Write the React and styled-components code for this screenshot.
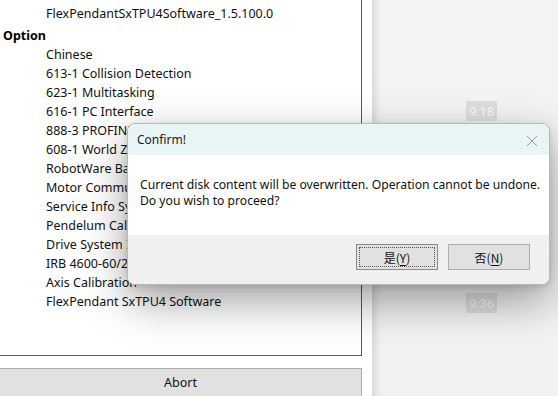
import React from 'react';
import styled, { createGlobalStyle } from 'styled-components';

const GlobalStyle = createGlobalStyle`
  html, body { margin: 0; padding: 0; background: #ffffff; }
  body { font-family: "Noto Sans", "Open Sans", sans-serif; overflow: hidden; }
`;

const Screen = styled.div`
  position: relative;
  width: 558px;
  height: 396px;
  display: flex;
  overflow: hidden;
  background: #fff;
`;

const LeftColumn = styled.div`
  width: 362px;
  display: flex;
  flex-direction: column;
`;

const ListPanel = styled.div`
  height: 357px;
  border-right: 1px solid #5a5a5a;
  border-bottom: 1px solid #5a5a5a;
  overflow: hidden;
  box-sizing: content-box;
`;

const ListInner = styled.div`
  margin-top: -15px;
  padding-left: 3px;
`;

const Heading = styled.div`
  font-weight: 700;
  font-size: 12.5px;
  line-height: 19px;
  color: #000;
  margin-top: 3px;
`;

const Item = styled.div`
  font-size: 12.5px;
  line-height: ${p => (p.clipped ? 14 : 19)}px;
  margin-bottom: ${p => (p.clipped ? 5 : 0)}px;
  color: #111;
  padding-left: 43px;
  white-space: nowrap;
`;

const AbortButton = styled.div`
  margin-top: 12px;
  height: 27px;
  border-top: 1px solid #adadad;
  border-right: 1px solid #adadad;
  background: #e1e1e1;
  display: flex;
  align-items: center;
  justify-content: center;
  font-size: 12.5px;
  color: #111;
`;

const Gutter = styled.div`
  width: 10px;
  background: #fff;
`;

const SidePanel = styled.div`
  flex: 1;
  background: linear-gradient(180deg, #f4f4f4 0%, #f2f2f2 100%);
  box-shadow: inset 9px 0 10px -7px rgba(0, 0, 0, 0.16);
  display: flex;
  flex-direction: column;
  padding-left: 94px;
  padding-top: 101px;
`;

const TimeTag = styled.div`
  width: 31px;
  height: 20px;
  background: #dedede;
  color: #f9f9f9;
  font-family: "Roboto", "Noto Sans", sans-serif;
  font-size: 13px;
  display: flex;
  align-items: center;
  justify-content: center;
  margin-bottom: ${p => p.gap || 0}px;
`;

const Dialog = styled.div`
  position: absolute;
  left: 127px;
  top: 123px;
  width: 421px;
  height: 160px;
  border: 1px solid #b9b9b9;
  border-radius: 8px;
  overflow: hidden;
  display: flex;
  flex-direction: column;
  box-shadow: 0 16px 44px rgba(0, 0, 0, 0.38), 0 2px 6px rgba(0, 0, 0, 0.12);
  background: #fff;
`;

const TitleBar = styled.div`
  height: 31px;
  flex: none;
  background: #e9f4f4;
  display: flex;
  align-items: center;
  justify-content: space-between;
  padding: 0 11px 0 9px;
  font-size: 12px;
  color: #1a1a1a;
`;

const CloseIcon = styled.svg`
  width: 12px;
  height: 12px;
  margin-top: 2px;
`;

const Body = styled.div`
  height: 80px;
  flex: none;
  background: #fff;
  padding: 22px 0 0 12px;
  box-sizing: border-box;
  font-size: 12.15px;
  line-height: 16px;
  color: #111;
`;

const Footer = styled.div`
  flex: 1;
  background: #f0f0f0;
  display: flex;
  justify-content: flex-end;
  align-items: flex-start;
  gap: 10px;
  padding: 9px 19px 0 0;
`;

const DlgButton = styled.div`
  width: 82px;
  height: 26px;
  box-sizing: border-box;
  border: 1px solid ${p => (p.focused ? '#8a8a8a' : '#adadad')};
  background: #e1e1e1;
  display: flex;
  align-items: center;
  justify-content: center;
  font-family: "Noto Sans CJK SC", "Noto Sans", sans-serif;
  font-size: 12px;
  color: #111;
  outline: ${p => (p.focused ? '1px dotted #555' : 'none')};
  outline-offset: -4px;
  u { text-decoration: underline; text-underline-offset: 2px; }
`;

const items = [
  'Chinese',
  '613-1 Collision Detection',
  '623-1 Multitasking',
  '616-1 PC Interface',
  '888-3 PROFINET Controller/Device',
  '608-1 World Zones',
  'RobotWare Base',
  'Motor Commutation',
  'Service Info System',
  'Pendelum Calibration',
  'Drive System IRB 4600',
  'IRB 4600-60/2.05',
  'Axis Calibration',
  'FlexPendant SxTPU4 Software',
];

export default function App() {
  return (
    <>
      <GlobalStyle />
      <Screen>
        <LeftColumn>
          <ListPanel>
            <ListInner>
              <Item clipped>RobotWare_6.15.0203</Item>
              <Item>FlexPendantSxTPU4Software_1.5.100.0</Item>
              <Heading>Option</Heading>
              {items.map(t => (
                <Item key={t}>{t}</Item>
              ))}
            </ListInner>
          </ListPanel>
          <AbortButton>Abort</AbortButton>
        </LeftColumn>
        <Gutter />
        <SidePanel>
          <TimeTag gap={172}>9:18</TimeTag>
          <TimeTag>9:36</TimeTag>
        </SidePanel>

        <Dialog>
          <TitleBar>
            <span>Confirm!</span>
            <CloseIcon viewBox="0 0 12 12">
              <path d="M1 1 L11 11 M11 1 L1 11" stroke="#9a9a9a" strokeWidth="1" fill="none" />
            </CloseIcon>
          </TitleBar>
          <Body>
            Current disk content will be overwritten. Operation cannot be undone.
            <br />
            Do you wish to proceed?
          </Body>
          <Footer>
            <DlgButton focused>是(<u>Y</u>)</DlgButton>
            <DlgButton>否(<u>N</u>)</DlgButton>
          </Footer>
        </Dialog>
      </Screen>
    </>
  );
}
